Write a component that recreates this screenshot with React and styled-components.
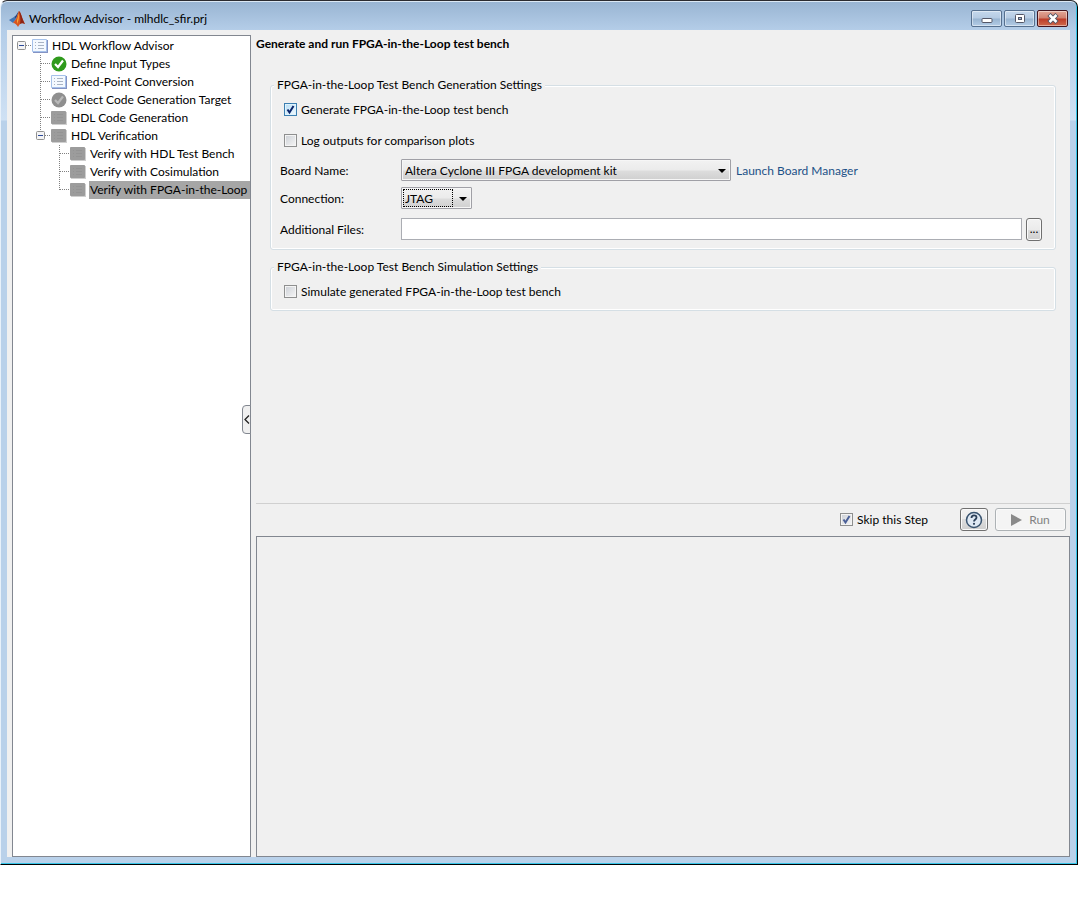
import React, { useState } from 'react'
import styled, { createGlobalStyle } from 'styled-components'

const GlobalStyle = createGlobalStyle`
  *, *::before, *::after {
    box-sizing: border-box;
  }

  body {
    margin: 0;
    background: #fff;
    color: #000;
    font: 12px/18px Lato, "Segoe UI", sans-serif;
  }

  button, input, select {
    margin: 0;
    color: inherit;
    font: inherit;
  }
`

/* window frame */

const Window = styled.div`
  display: flex;
  flex-direction: column;
  height: calc(100vh - 54px);
  min-height: 600px;
  padding: 0 7px 7px 6px;
  border: 1px solid #000;
  border-top-color: #2b2b30;
  border-left-color: #e8f1fa;
  border-radius: 7px 7px 0 0;
  background: linear-gradient(#98b4d2, #b4cde8 29px, #cfe1f4 119px, #b9d1ea 120px);
  box-shadow: inset -1px -1px #35c5e8, inset 0 1px #dbe8f4;
`

const TitleBar = styled.header`
  display: flex;
  align-items: center;
  flex: 0 0 29px;
  gap: 4px;
  padding: 6px 2px 0 2px;
`

const WindowTitle = styled.h1`
  flex: 1;
  margin: 0;
  font-size: 12px;
  font-weight: 400;
`

const WindowButtons = styled.div`
  display: flex;
  gap: 2px;
`

const WindowButton = styled.button`
  display: flex;
  align-items: center;
  justify-content: center;
  width: 31px;
  height: 17px;
  padding: 0;
  border: 1px solid ${(props) => (props.$close ? '#43131d' : '#56708f')};
  border-radius: 2px;
  background: ${(props) =>
    props.$close
      ? 'linear-gradient(#e3a797, #d0806f 7px, #bd3c28 8px, #cf6a4c)'
      : 'linear-gradient(#c5d8ec, #b5cbe3 7px, #98b4d1 8px, #b3cce6)'};
  box-shadow: inset 0 0 0 1px rgba(255, 255, 255, 0.45);
`

const Body = styled.main`
  display: flex;
  flex: 1;
  min-height: 0;
  gap: 5px;
  padding: 5px 0 0 5px;
  background: #f0f0f0;
`

/* step tree */

const Sidebar = styled.nav`
  position: relative;
  flex: 0 0 239px;
  border: 1px solid #828790;
  background: #fff;
`

const Tree = styled.ul`
  margin: 0;
  padding: 1px 0 0;
  list-style: none;
`

const TreeRow = styled.div`
  display: flex;
  align-items: center;
  height: 18px;
`

const TreeLabel = styled.span`
  flex: 1;
  margin-left: 3px;
  padding-left: 1px;
  white-space: nowrap;
  background: ${(props) => (props.$selected ? '#a6a6a6' : 'transparent')};
`

const Handle = styled.button`
  position: absolute;
  top: 45%;
  right: -1px;
  width: 9px;
  height: 29px;
  padding: 0;
  border: 1px solid #828790;
  border-radius: 4px 0 0 4px;
  background: #f0f0f0;

  svg {
    display: block;
  }
`

/* right side */

const Content = styled.div`
  display: flex;
  flex: 1;
  flex-direction: column;
  min-width: 0;
`

const Settings = styled.section`
  flex: 1;
  padding: 0 14px;
`

const StepTitle = styled.h2`
  margin: 0 -14px 23px;
  font-size: 12px;
  font-weight: 700;
`

const Group = styled.fieldset`
  margin: 0 0 8px;
  padding: 0 13px 3px 9px;
  border: 1px solid #d5dfe5;
  border-radius: 3px;
  box-shadow: inset 0 0 0 1px #fff;
`

const Legend = styled.legend`
  margin-left: -6px;
  padding: 0 3px;
  background: #f0f0f0;
`

const CheckLabel = styled.label`
  display: flex;
  align-items: center;
  gap: 4px;
  height: ${(props) => (props.$inline ? '22px' : '31px')};
  padding-left: 4px;
`

const CheckBox = styled.span`
  position: relative;
  width: 13px;
  height: 13px;

  input {
    display: block;
    width: 13px;
    height: 13px;
    appearance: none;
    border: 1px solid ${(props) => (props.$hot ? '#3c7fb1' : '#8e8f8f')};
    background: ${(props) =>
      props.$hot
        ? 'linear-gradient(135deg, #b5dcf5, #f3fafe)'
        : 'linear-gradient(135deg, #cbcfd5, #f6f6f6)'};
    box-shadow: inset 0 0 0 1px ${(props) => (props.$hot ? '#dff3fd' : '#f4f4f4')};
  }

  svg {
    position: absolute;
    top: 0;
    left: 0;
    pointer-events: none;
  }
`

const Fields = styled.div`
  display: grid;
  grid-template-columns: 121px 1fr;
  grid-template-rows: 28px 28px 34px;
  align-items: center;
`

const FieldLabel = styled.label`
  padding-top: 2px;
`

const FieldRow = styled.div`
  display: flex;
  align-items: center;
  gap: ${(props) => props.$gap || 5}px;
`

const SelectBox = styled.span`
  position: relative;
  width: ${(props) => props.$width}px;

  select {
    display: block;
    width: 100%;
    height: 22px;
    padding: 1px 20px 0 3px;
    appearance: none;
    border: 1px solid #a0a0a6;
    border-radius: 1px;
    background: linear-gradient(#f2f2f2, #ebebeb 10px, #dddddd 11px, #cfcfcf);
    box-shadow: inset 0 0 0 1px #f6f6f6;
  }

  svg {
    position: absolute;
    top: 10px;
    right: 5px;
    pointer-events: none;
  }
`

const FocusRing = styled.span`
  position: absolute;
  inset: 2px 19px 2px 2px;
  border: 1px dotted #000;
  pointer-events: none;
`

const TextInput = styled.input`
  flex: 1;
  min-width: 0;
  height: 22px;
  padding: 0 4px;
  border: 1px solid #abadb3;
  background: #fff;
`

const Link = styled.a`
  padding-top: 2px;
  color: #1c5187;
  text-decoration: none;
`

const Button = styled.button`
  display: flex;
  align-items: center;
  justify-content: center;
  gap: 7px;
  width: ${(props) => props.$width}px;
  height: 23px;
  padding: 0;
  border: 1px solid #707070;
  border-radius: 3px;
  background: linear-gradient(#f2f2f2, #ebebeb 50%, #dddddd 50%, #cfcfcf);
  box-shadow: inset 0 0 0 1px #fafafa;

  &:disabled {
    border-color: #adb2b5;
    background: #f4f4f4;
    color: #838383;
  }
`

const ActionBar = styled.div`
  display: flex;
  align-items: center;
  justify-content: flex-end;
  gap: 7px;
  height: 33px;
  padding: 0 4px 1px 0;
  border-top: 1px solid #d0d0d0;
`

const SkipStep = styled.div`
  margin-right: 25px;
`

const Output = styled.section`
  flex: 0 0 321px;
  border: 1px solid #828790;
`

/* drawings */

const Logo = () => (
  <svg width="16" height="16" viewBox="0 0 16 16" aria-hidden="true">
    <path d="M0 9l5-3 2 2-3 4z" fill="#3f74b5" />
    <path d="M5 6c2-1 3-4 5-6L7 8z" fill="#264a86" />
    <path d="M4 12l3-4c1-2 2-7 3-8 2 1 3 8 6 13-3-2-5-1-7 3-1-2-3-4-5-4z" fill="#d8541e" />
    <path d="M10 0c2 1 3 8 6 13-2-1-4-1-5 0 1-4 0-9-1-13z" fill="#8d2416" />
    <path d="M8 9c1-2 1-5 2-7 0 4 0 7-2 11z" fill="#f5a73c" />
  </svg>
)

const ListIcon = ({ muted }) => (
  <svg width="16" height="14" viewBox="0 0 16 14" aria-hidden="true">
    <path d="M1 1h15v13H1z" fill={muted ? '#cfcfcf' : '#8493c4'} />
    <path
      d="M.5.5h14v12H.5z"
      fill={muted ? '#9c9c9c' : '#f4f9ff'}
      stroke={muted ? '#9c9c9c' : '#a5c1ea'}
    />
    <path
      d="M3 3.500h1m2 0h6M3 6.500h1m2 0h6M3 9.500h1m2 0h6"
      stroke={muted ? '#949494' : '#a9b4c4'}
    />
  </svg>
)

const StatusIcon = ({ done }) => (
  <svg width="16" height="16" viewBox="0 0 16 16" aria-hidden="true">
    <circle cx="8" cy="8" r="7.500" fill={done ? '#2f9a1c' : '#8f8f8f'} />
    <path
      d="M4 8L7 11l5-6.500"
      fill="none"
      stroke={done ? '#fff' : '#b9b9b9'}
      strokeWidth="2.200"
    />
  </svg>
)

const icons = {
  list: <ListIcon />,
  muted: <ListIcon muted />,
  done: <StatusIcon done />,
  pending: <StatusIcon />,
}

// one 19px guide cell: the dotted branch line and, for parents, the toggle box
const Guide = ({ branch, last, toggle }) => (
  <svg width="19" height="18" viewBox="0 0 19 18" aria-hidden="true">
    {branch && (
      <path d={`M8.500 0v${last ? 10 : 18}`} stroke="#808080" strokeDasharray="1 1" />
    )}
    <path d="M9 8.500h10" stroke="#808080" strokeDasharray="1 1" />
    {toggle && (
      <>
        <rect x="4.500" y="4.500" width="8" height="8" rx="1" fill="#f4f4f4" stroke="#919191" />
        <path d="M6 8.500h5" stroke="#2b4a9b" />
      </>
    )}
  </svg>
)

const Indent = styled.span`
  flex: 0 0 ${(props) => props.$depth * 19}px;
`

const Tick = ({ color }) => (
  <svg width="13" height="13" viewBox="0 0 13 13" aria-hidden="true">
    <path d="M3.500 6.500L5.500 9.500L9.500 3" fill="none" stroke={color} strokeWidth="2" />
  </svg>
)

const Arrow = () => (
  <svg width="8" height="4" viewBox="0 0 8 4" aria-hidden="true">
    <path d="M0 0h8L4 4z" fill="#000" />
  </svg>
)

const Check = ({ children, checked, hot, inline }) => {
  const [on, setOn] = useState(!!checked)

  return (
    <CheckLabel $inline={inline}>
      <CheckBox $hot={hot}>
        <input type="checkbox" checked={on} onChange={() => setOn(!on)} />
        {on && <Tick color={hot ? '#0a246a' : '#4a5f97'} />}
      </CheckBox>
      {children}
    </CheckLabel>
  )
}

const steps = [
  { label: 'HDL Workflow Advisor', icon: 'list', depth: 0, toggle: true },
  { label: 'Define Input Types', icon: 'done', depth: 1 },
  { label: 'Fixed-Point Conversion', icon: 'list', depth: 1 },
  { label: 'Select Code Generation Target', icon: 'pending', depth: 1 },
  { label: 'HDL Code Generation', icon: 'muted', depth: 1 },
  { label: 'HDL Verification', icon: 'muted', depth: 1, toggle: true, last: true },
  { label: 'Verify with HDL Test Bench', icon: 'muted', depth: 2 },
  { label: 'Verify with Cosimulation', icon: 'muted', depth: 2 },
  { label: 'Verify with FPGA-in-the-Loop', icon: 'muted', depth: 2, last: true, selected: true },
]

const App = () => {
  return (
    <>
      <GlobalStyle />
      <Window>
        <TitleBar>
          <Logo />
          <WindowTitle>Workflow Advisor - mlhdlc_sfir.prj</WindowTitle>
          <WindowButtons>
            <WindowButton aria-label="Minimize">
              <svg width="12" height="11" viewBox="0 0 12 11">
                <rect x="1" y="5.500" width="10" height="4" rx="1" fill="#fff" stroke="#535666" />
              </svg>
            </WindowButton>
            <WindowButton aria-label="Maximize">
              <svg width="12" height="11" viewBox="0 0 12 11">
                <rect x="1.500" y="1.500" width="9" height="8" rx="1" fill="#fff" stroke="#535666" />
                <rect x="4.500" y="4.500" width="3" height="2" fill="#9dbbdc" stroke="#535666" />
              </svg>
            </WindowButton>
            <WindowButton $close aria-label="Close">
              <svg width="12" height="11" viewBox="0 0 12 11">
                <path d="M2 1.500l8 8m0-8l-8 8" stroke="#535666" strokeWidth="4.500" />
                <path d="M2.500 2l7 7m0-7l-7 7" stroke="#fff" strokeWidth="2.500" />
              </svg>
            </WindowButton>
          </WindowButtons>
        </TitleBar>

        <Body>
          <Sidebar>
            <Tree>
              {steps.map((step) => (
                <li key={step.label}>
                  <TreeRow>
                    <Indent $depth={step.depth} />
                    <Guide branch={step.depth > 0} last={step.last} toggle={step.toggle} />
                    {icons[step.icon]}
                    <TreeLabel $selected={step.selected}>{step.label}</TreeLabel>
                  </TreeRow>
                </li>
              ))}
            </Tree>
            <Handle aria-label="Collapse">
              <svg width="7" height="27" viewBox="0 0 7 27">
                <path d="M6 9.500l-4 4 4 4" fill="none" stroke="#222" strokeWidth="1.300" />
              </svg>
            </Handle>
          </Sidebar>

          <Content>
            <Settings>
              <StepTitle>Generate and run FPGA-in-the-Loop test bench</StepTitle>

              <Group>
                <Legend>FPGA-in-the-Loop Test Bench Generation Settings</Legend>
                <Check checked hot>Generate FPGA-in-the-Loop test bench</Check>
                <Check>Log outputs for comparison plots</Check>
                <Fields>
                  <FieldLabel htmlFor="board">Board Name:</FieldLabel>
                  <FieldRow>
                    <SelectBox $width={330}>
                      <select id="board">
                        <option>Altera Cyclone III FPGA development kit</option>
                      </select>
                      <Arrow />
                    </SelectBox>
                    <Link href="#boards">Launch Board Manager</Link>
                  </FieldRow>
                  <FieldLabel htmlFor="connection">Connection:</FieldLabel>
                  <FieldRow>
                    <SelectBox $width={71}>
                      <select id="connection">
                        <option>JTAG</option>
                      </select>
                      <FocusRing />
                      <Arrow />
                    </SelectBox>
                  </FieldRow>
                  <FieldLabel htmlFor="files">Additional Files:</FieldLabel>
                  <FieldRow $gap={4}>
                    <TextInput id="files" type="text" />
                    <Button $width={16} aria-label="Browse">...</Button>
                  </FieldRow>
                </Fields>
              </Group>

              <Group>
                <Legend>FPGA-in-the-Loop Test Bench Simulation Settings</Legend>
                <Check>Simulate generated FPGA-in-the-Loop test bench</Check>
              </Group>
            </Settings>

            <ActionBar>
              <SkipStep>
                <Check checked inline>Skip this Step</Check>
              </SkipStep>
              <Button $width={28} aria-label="Help">
                <svg width="18" height="18" viewBox="0 0 18 18">
                  <circle cx="9" cy="9" r="7.500" fill="#dfe9f4" stroke="#39536f" strokeWidth="1.500" />
                  <path
                    d="M6.500 7c0-3.500 5-3.500 5-.5 0 2-2.500 2-2.500 4"
                    fill="none"
                    stroke="#2b3f58"
                    strokeWidth="1.800"
                  />
                  <circle cx="9" cy="12.800" r="1.100" fill="#2b3f58" />
                </svg>
              </Button>
              <Button $width={71} disabled>
                <svg width="11" height="12" viewBox="0 0 11 12">
                  <path d="M0 0l11 6-11 6z" fill="#8a8a8a" />
                </svg>
                Run
              </Button>
            </ActionBar>
            <Output aria-label="Output" />
          </Content>
        </Body>
      </Window>
    </>
  )
}

export default App
